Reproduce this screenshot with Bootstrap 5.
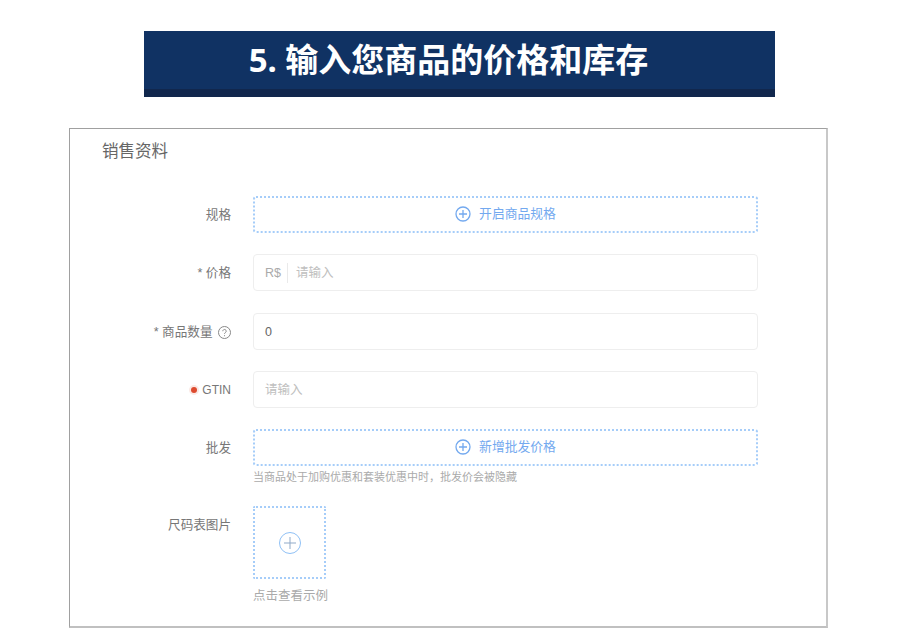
<!DOCTYPE html>
<html lang="zh">
<head>
<meta charset="utf-8">
<title>价格和库存</title>
<link href="https://cdn.jsdelivr.net/npm/bootstrap@5.3.0/dist/css/bootstrap.min.css" rel="stylesheet">
<style>
html,body{height:637px;overflow:hidden;background:#fff}
body{font-family:"Liberation Sans","Noto Sans CJK SC",sans-serif;padding-top:31px}
.hero-bar{width:631px;height:66px;margin:0 0 0 144px;padding-right:22px;background:#103263;border-bottom:8px solid #11274d;color:#fff;font-family:"Noto Sans","Noto Sans CJK SC",sans-serif;font-weight:700;font-size:33px;line-height:58px;text-align:center}
.panel-box{width:759px;height:500px;margin:31px 0 0 69px;border:1px solid #a0a0a0;border-right:2px solid #c8c8c8;border-bottom:2px solid #c0c0c0}
.panel-title{font-size:16.5px;line-height:22px;color:#666;padding:11px 0 0 32px;height:67px}
.form-line{height:37px;margin-bottom:21.25px}
.form-line.tight{margin-bottom:0}
.lbl{width:161px;flex:none;text-align:right;font-size:12.6px;color:#777;line-height:39px}
.lbl-latin{font-size:12px}
.ctl{width:505px;margin-left:22px;flex:none;font-size:12.5px}
.dash-btn{height:37px;padding-bottom:2px;border:2px dotted #a6cdf9;border-radius:3px;color:#73a9ef;font-size:12.8px}
.plain-input{height:37px;border:1px solid #eee;border-radius:4px;padding:0 11px;color:#666;line-height:36px}
.ph{color:#c0c0c0}
.pre{color:#aaa;padding-right:6px;border-right:1px solid #eaeaea;height:20px;line-height:20px;margin-right:8px}
.hint{font-size:11px;color:#aaa;line-height:16px;margin-top:3px}
.red-dot{display:inline-block;width:6px;height:6px;border-radius:50%;background:#dd4b2f;box-shadow:0 0 0 2px #fbe9e5;margin-right:5px;vertical-align:1px}
.q-mark{margin-left:2px}
.up-box{width:73px;height:73px;border:2px dotted #a6cdf9;border-radius:2px}
.up-row{margin-top:40px}
.up-row .lbl{line-height:38px}
.up-row .hint{font-size:12.5px;margin-top:9px}
</style>
</head>
<body>
<h1 class="hero-bar">5. 输入您商品的价格和库存</h1>
<div class="panel-box bg-white">
  <div class="panel-title">销售资料</div>
  <div class="form-line d-flex">
    <div class="lbl">规格</div>
    <div class="ctl"><div class="dash-btn d-flex align-items-center justify-content-center gap-2">
      <svg width="16" height="16" viewBox="0 0 16 16" fill="none" stroke="#73a9ef" stroke-width="1.3" aria-hidden="true"><circle cx="8" cy="8" r="7"/><path d="M8 4v8M4 8h8"/></svg>开启商品规格</div></div>
  </div>
  <div class="form-line d-flex">
    <div class="lbl">* 价格</div>
    <div class="ctl"><div class="plain-input d-flex align-items-center"><span class="pre">R$</span><span class="ph">请输入</span></div></div>
  </div>
  <div class="form-line d-flex">
    <div class="lbl">* 商品数量 <svg width="13" height="13" viewBox="0 0 13 13" fill="none" stroke="#888" aria-hidden="true" class="align-middle q-mark"><circle cx="6.5" cy="6.5" r="6"/><path d="M4.8 5.2a1.7 1.7 0 1 1 2.6 1.4c-.6.4-.9.7-.9 1.3M6.5 9.2v1"/></svg></div>
    <div class="ctl"><div class="plain-input">0</div></div>
  </div>
  <div class="form-line d-flex">
    <div class="lbl lbl-latin"><span class="red-dot"></span>GTIN</div>
    <div class="ctl"><div class="plain-input ph">请输入</div></div>
  </div>
  <div class="form-line tight d-flex">
    <div class="lbl">批发</div>
    <div class="ctl"><div class="dash-btn d-flex align-items-center justify-content-center gap-2">
      <svg width="16" height="16" viewBox="0 0 16 16" fill="none" stroke="#73a9ef" stroke-width="1.3" aria-hidden="true"><circle cx="8" cy="8" r="7"/><path d="M8 4v8M4 8h8"/></svg>新增批发价格</div>
      <div class="hint">当商品处于加购优惠和套装优惠中时，批发价会被隐藏</div></div>
  </div>
  <div class="d-flex up-row">
    <div class="lbl">尺码表图片</div>
    <div class="ctl"><div class="up-box d-flex align-items-center justify-content-center">
      <svg width="22" height="22" viewBox="0 0 22 22" fill="none" stroke="#8fc0f5" aria-hidden="true"><circle cx="11" cy="11" r="10.5"/><path d="M11 5v12M5 11h12" stroke="#8fa9c8"/></svg></div>
      <div class="hint">点击查看示例</div></div>
  </div>
</div>
<script src="https://cdn.jsdelivr.net/npm/bootstrap@5.3.0/dist/js/bootstrap.bundle.min.js"></script>
</body>
</html>
